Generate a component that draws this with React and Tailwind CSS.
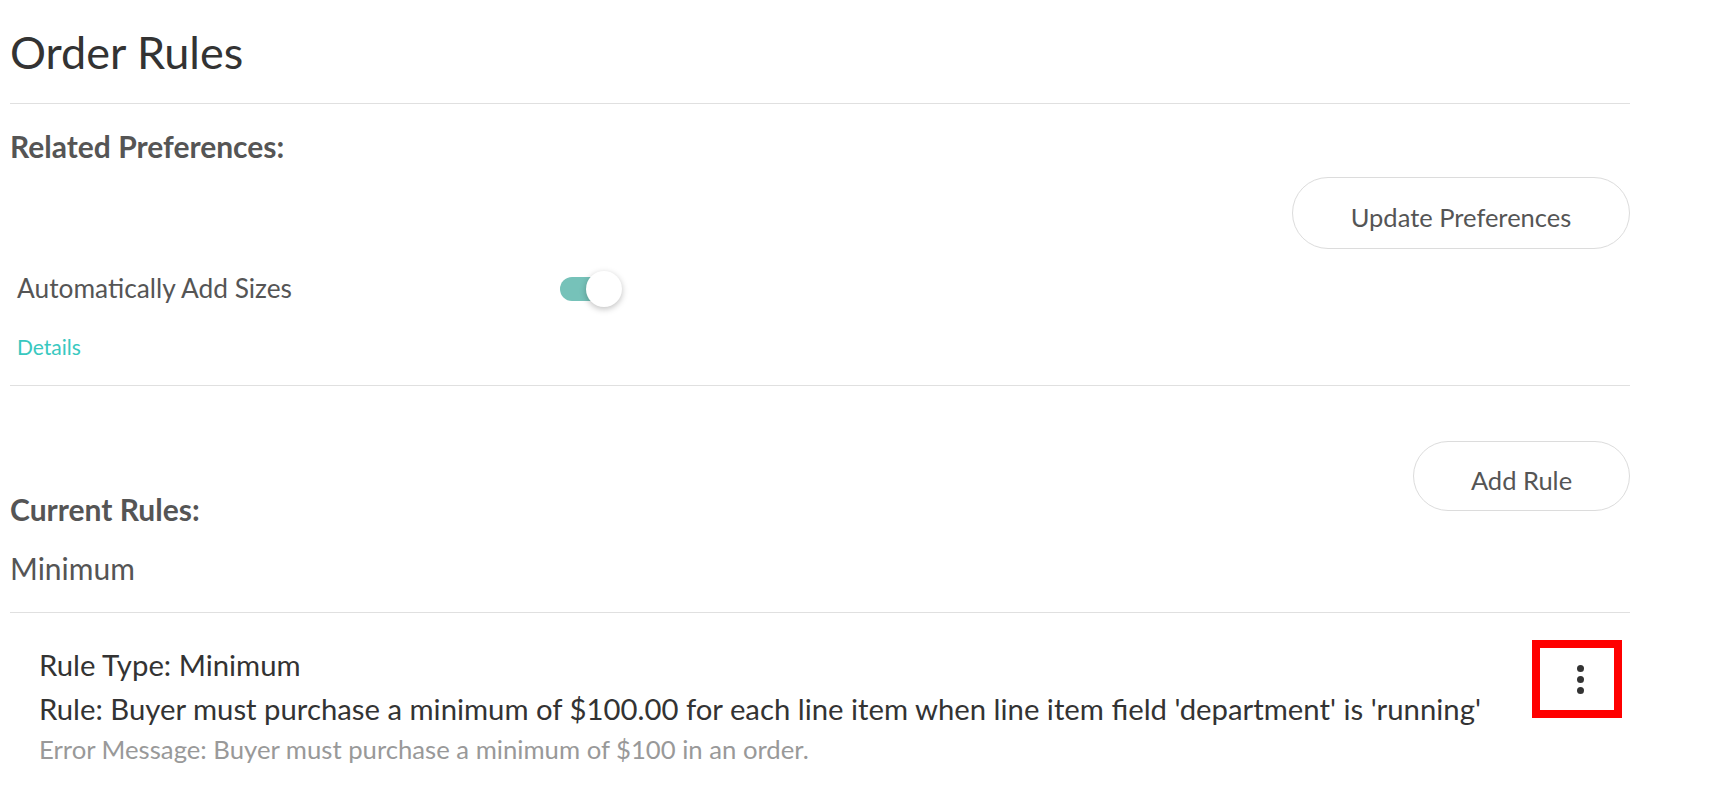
import { useState } from 'react';

const Toggle = ({ on, onChange }) => (
    <button
        type="button"
        onClick={() => onChange(!on)}
        className="relative flex items-center w-[62px] h-[36px] shrink-0"
    >
        <span className={`w-[50px] h-[24px] rounded-full ${on ? 'bg-[#76c2b9]' : 'bg-[#cfcfcf]'}`} />
        <span
            className={`absolute top-0 w-[36px] h-[36px] rounded-full bg-white shadow-[0_2px_6px_rgba(0,0,0,0.25)] ${on ? 'left-[26px]' : 'left-0'}`}
        />
    </button>
);

const PillButton = ({ children, className = '' }) => (
    <button
        type="button"
        className={`rounded-full border border-[#dcdcdc] bg-white pt-[8px] text-[25.5px] text-[#555] ${className}`}
    >
        {children}
    </button>
);

export default function App() {
    const [autoSizes, setAutoSizes] = useState(true);

    return (
        <div className="min-h-screen bg-white font-['Lato',sans-serif]">
            <div className="w-[1620px] ml-[10px]">
                {/* header */}
                <div className="h-[103px] flex items-center">
                    <h1 className="text-[45px] leading-[1.2] text-[#333]">Order Rules</h1>
                </div>

                {/* preferences */}
                <div className="border-t border-[#e0e0e0] pb-[26px]">
                    <h3 className="pt-[24px] text-[30px] leading-[1.2] font-bold text-[#555]">Related Preferences:</h3>
                    <div className="flex justify-end mt-[13px]">
                        <PillButton className="w-[338px] h-[72px]">Update Preferences</PillButton>
                    </div>
                    <div className="h-[80px] flex items-center pl-[7px]">
                        <span className="w-[543px] shrink-0 text-[26.3px] leading-[1.2] text-[#555]">Automatically Add Sizes</span>
                        <Toggle on={autoSizes} onChange={setAutoSizes} />
                    </div>
                    <a href="#" className="block mt-[5px] pl-[7px] text-[21px] leading-[1.2] text-[#38c8bf]">
                        Details
                    </a>
                </div>

                {/* rules */}
                <div className="border-t border-[#e0e0e0]">
                    <div className="flex justify-between items-start">
                        <h3 className="pt-[105px] text-[30px] leading-[1.2] font-bold text-[#555]">Current Rules:</h3>
                        <PillButton className="mt-[55px] w-[217px] h-[70px]">Add Rule</PillButton>
                    </div>
                    <div className="mt-[23px] mb-[26px] text-[30px] leading-[1.2] text-[#555]">Minimum</div>
                </div>

                <div className="border-t border-[#e0e0e0] flex justify-between items-start">
                    <div className="pl-[29px] pt-[30px]">
                        <p className="text-[29.3px] leading-[44px] text-[#333]">Rule Type: Minimum</p>
                        <p className="text-[29.3px] leading-[44px] text-[#333]">
                            Rule: Buyer must purchase a minimum of $100.00 for each line item when line item field 'department' is 'running'
                        </p>
                        <p className="text-[25.7px] leading-[37px] text-[#999]">
                            Error Message: Buyer must purchase a minimum of $100 in an order.
                        </p>
                    </div>
                    <button
                        type="button"
                        className="mt-[27px] mr-[8px] w-[90px] h-[78px] pl-[6px] border-[8px] border-[#ff0000] flex flex-col items-center justify-center gap-[4px]"
                    >
                        <span className="w-[7px] h-[7px] rounded-full bg-[#333]" />
                        <span className="w-[7px] h-[7px] rounded-full bg-[#333]" />
                        <span className="w-[7px] h-[7px] rounded-full bg-[#333]" />
                    </button>
                </div>
            </div>
        </div>
    );
}
